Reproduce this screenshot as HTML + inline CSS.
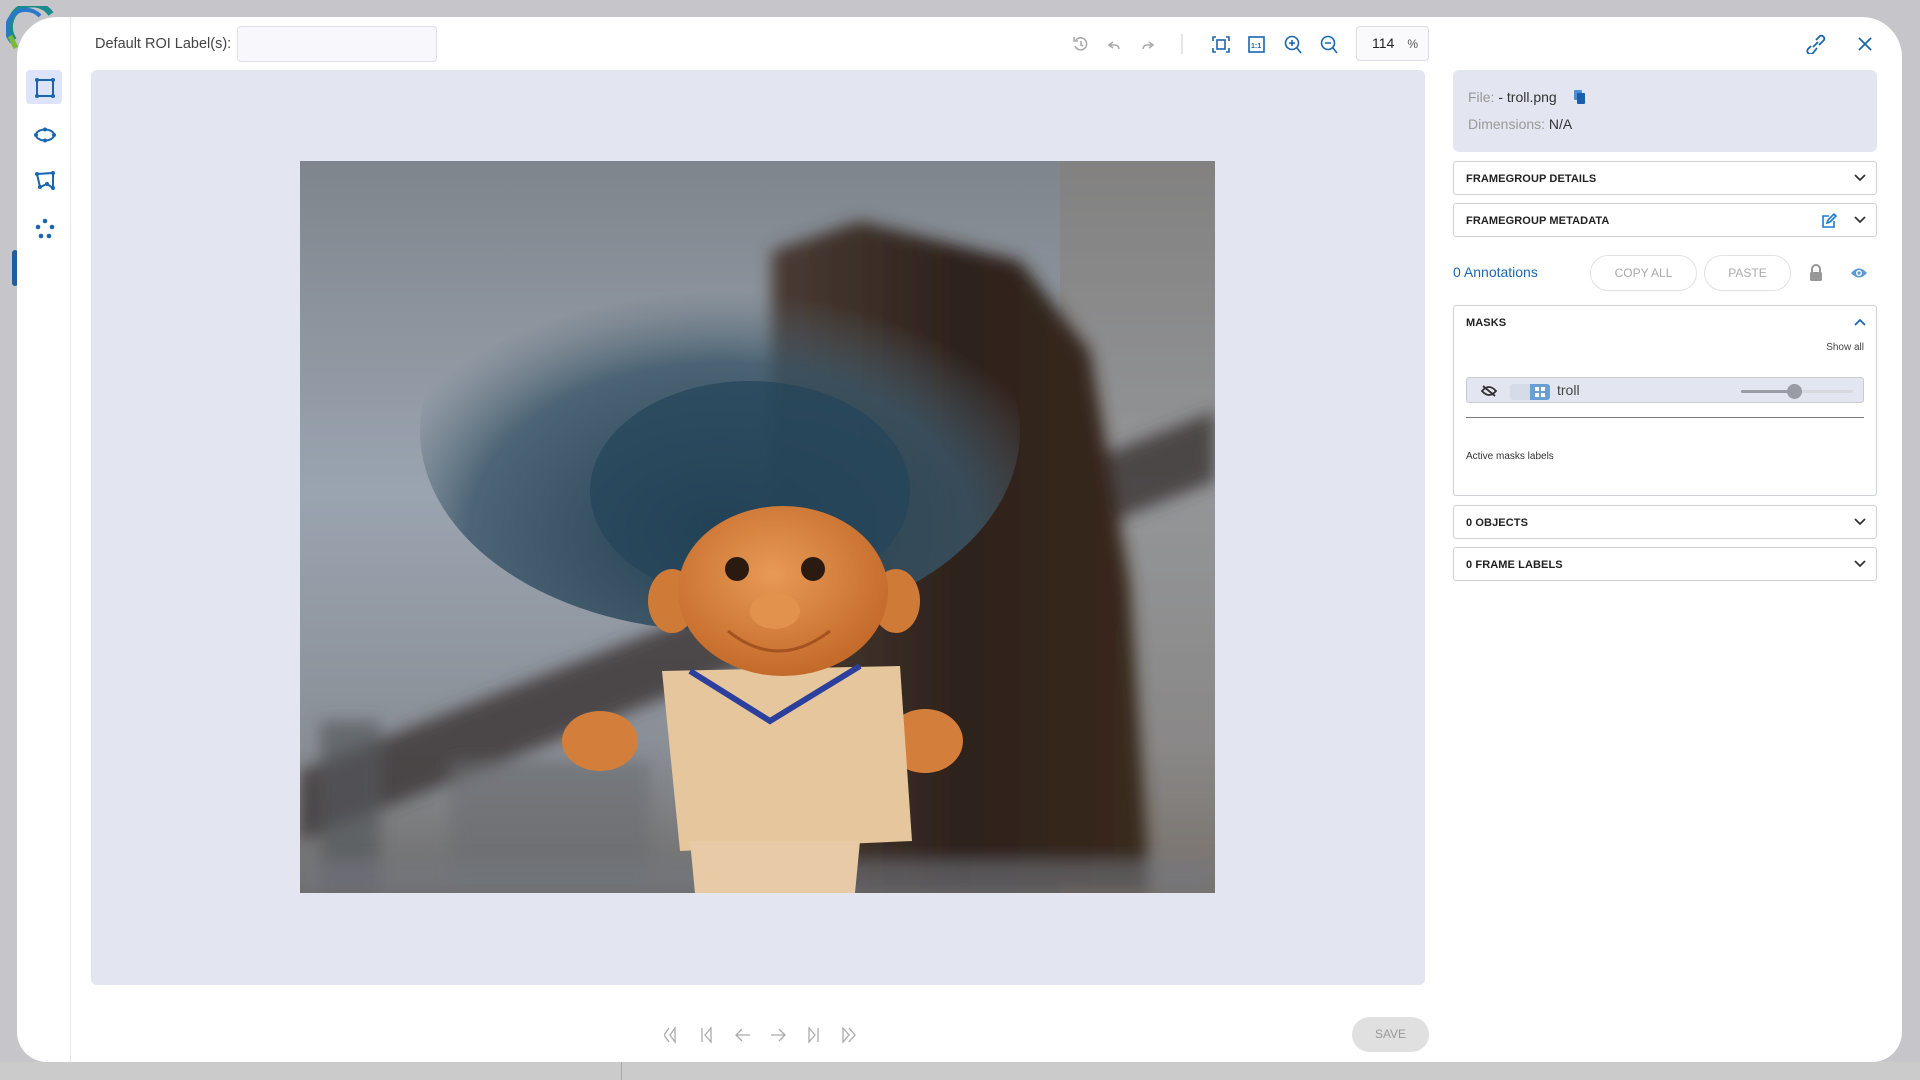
<!DOCTYPE html>
<html><head><meta charset="utf-8"><style>
*{box-sizing:border-box;margin:0;padding:0}
body{width:1920px;height:1080px;overflow:hidden;background:#c6c6ca;font-family:"Liberation Sans",sans-serif;position:relative;color:#333}
.abs{position:absolute}
.modal{left:17px;top:17px;width:1885px;height:1045px;background:#fff;border-radius:40px 40px 30px 30px;overflow:hidden}
.side{left:0;top:0;width:54px;height:100%;border-right:1px solid #e4e6ee}
.ic{stroke:#1a66b0;fill:none;stroke-width:2}
.panel{border:1px solid #cfd2da;border-radius:3px;background:#fff}
.ptitle{font-size:11px;font-weight:bold;color:#222;letter-spacing:.1px}
.btn{border:1px solid #e2e2e2;border-radius:20px;font-size:12px;color:#aaa;text-align:center;line-height:34px}
</style></head><body>
<div class="abs" style="left:0;top:1062px;width:1920px;height:18px;background:#cbcbcb"></div>
<div class="abs" style="left:621px;top:1062px;width:1px;height:18px;background:#aaa"></div>
<svg class="abs" style="left:6px;top:6px" width="50" height="44"><path d="M8 34 A20 20 0 0 1 45 8" stroke="#1b8a8a" stroke-width="6" fill="none"/><path d="M6 36 A18 18 0 0 1 34 10" stroke="#2a78c8" stroke-width="4" fill="none"/><path d="M4 30 L10 42" stroke="#7ab83a" stroke-width="5"/></svg>
<div class="abs" style="left:12px;top:250px;width:6px;height:36px;background:#1b5fa0;border-radius:3px"></div>
<div class="abs modal">
 <div class="abs side" style="width:54px"></div>
 <div class="abs" style="left:9px;top:53px;width:36px;height:34px;background:#dde3fa;border-radius:4px"></div>
 <svg class="abs" style="left:17px;top:60px" width="22" height="22"><rect x="3" y="3" width="16" height="16" class="ic" stroke-width="1.6"/><g fill="#1a66b0"><circle cx="3" cy="3" r="2"/><circle cx="19" cy="3" r="2"/><circle cx="3" cy="19" r="2"/><circle cx="19" cy="19" r="2"/></g></svg>
 <svg class="abs" style="left:16px;top:107px" width="24" height="22"><ellipse cx="12" cy="11" rx="9" ry="5.5" class="ic"/><g fill="#1a66b0"><circle cx="12" cy="5.5" r="2"/><circle cx="12" cy="16.5" r="2"/><circle cx="3" cy="11" r="2"/><circle cx="21" cy="11" r="2"/></g></svg>
 <svg class="abs" style="left:17px;top:153px" width="22" height="22"><path d="M3 4 L19 3 L19 18 L13 14 L6 17 Z" class="ic" stroke-width="1.5"/><g fill="#1a66b0"><circle cx="3" cy="4" r="2"/><circle cx="19" cy="3" r="2"/><circle cx="19" cy="18" r="2"/><circle cx="13" cy="14" r="2"/><circle cx="6" cy="17" r="2"/></g></svg>
 <svg class="abs" style="left:17px;top:200px" width="22" height="22"><g fill="#1a66b0"><circle cx="11" cy="4" r="2.3"/><circle cx="4" cy="10" r="2.3"/><circle cx="18" cy="10" r="2.3"/><circle cx="7" cy="19" r="2.3"/><circle cx="15" cy="19" r="2.3"/></g></svg>

 <div class="abs" style="left:78px;top:19px;font-size:14.5px;color:#444;line-height:16px">Default ROI Label(s):</div>
 <div class="abs" style="left:220px;top:9px;width:200px;height:36px;background:#f8f8fc;border:1px solid #dfe0e6;border-radius:4px"></div>

 <svg class="abs" style="left:1054px;top:17px" width="300" height="20" fill="none" stroke-width="1.6">
  <g stroke="#aaa"><path d="M5 6 A6 6 0 1 1 4 12"/><path d="M3 3 V7 H7"/><path d="M10 7 V11 L12 12"/>
  <path d="M42 8 L38 11 L42 14 M38 11 H44 A4 4 0 0 1 48 15"/>
  <path d="M78 8 L82 11 L78 14 M82 11 H76 A4 4 0 0 0 72 15"/></g>
  <path d="M111 0 V20" stroke="#ccc" stroke-width="1"/>
  <g stroke="#1a66b0" transform="translate(5,0)"><path d="M140 3 H137 V7 M150 3 H153 V7 M140 18 H137 V14 M150 18 H153 V14"/><rect x="141" y="6" width="8" height="9"/>
  <rect x="173" y="3" width="15" height="15"/><text x="175" y="14" font-size="7" fill="#1a66b0" stroke="none" font-family="Liberation Sans" font-weight="bold">1:1</text></g>
  <g stroke="#1a66b0" transform="translate(12,0)">
  <circle cx="209" cy="9" r="6.5"/><path d="M214 14 L218 19 M206 9 H212 M209 6 V12"/>
  <circle cx="245" cy="9" r="6.5"/><path d="M250 14 L254 19 M242 9 H248"/></g>
 </svg>
 <div class="abs" style="left:1339px;top:9px;width:73px;height:35px;border:1px solid #dcdde3;border-radius:4px;background:#fafafd;font-size:14px;line-height:33px;color:#222"><span style="margin-left:15px">114</span><span style="margin-left:13px;font-size:12px;color:#555">%</span></div>
 <svg class="abs" style="left:1788px;top:17px" width="90" height="20" fill="none" stroke="#1a66b0" stroke-width="1.8"><path d="M6 12 L3 15 A3 3 0 0 0 8 19 L12 14 M11 6 L15 2 A3 3 0 0 1 19 6 L14 11 M8 13 L13 8"/><path d="M54 4 L66 16 M66 4 L54 16"/></svg>

 <div class="abs" style="left:74px;top:53px;width:1334px;height:915px;background:#e3e6f0;border-radius:6px"></div>
 <svg class="abs" style="left:283px;top:144px" width="915" height="732" viewBox="0 0 915 732">
  <defs>
   <linearGradient id="bg" x1="0" y1="0" x2="0" y2="1"><stop offset="0" stop-color="#7f858c"/><stop offset=".45" stop-color="#9aa4b0"/><stop offset=".8" stop-color="#8a8f96"/><stop offset="1" stop-color="#6e6c6a"/></linearGradient>
   <linearGradient id="tw" x1="0" y1="0" x2="1" y2="0"><stop offset="0" stop-color="#4a3c34"/><stop offset=".5" stop-color="#2e221c"/><stop offset="1" stop-color="#3a2a1e"/></linearGradient>
   <radialGradient id="hd" cx=".45" cy=".4" r=".6"><stop offset="0" stop-color="#e89a55"/><stop offset="1" stop-color="#c46a2a"/></radialGradient>
   <radialGradient id="hr" cx=".5" cy=".75" r=".6"><stop offset="0" stop-color="#1f3c4e"/><stop offset=".7" stop-color="#3a5668" stop-opacity=".8"/><stop offset="1" stop-color="#5a6c78" stop-opacity="0"/></radialGradient>
   <filter id="bl"><feGaussianBlur stdDeviation="8"/></filter>
  </defs>
  <rect width="915" height="732" fill="url(#bg)"/>
  <rect x="760" y="0" width="155" height="732" fill="#8a7a6c" opacity=".35"/>
  <g filter="url(#bl)">
  <path d="M0 640 L0 610 L915 250 L915 320 L0 680 Z" fill="#3e3a38" opacity=".85"/>
  <rect x="20" y="560" width="60" height="172" fill="#55585c" opacity=".7"/>
  <rect x="150" y="600" width="200" height="132" fill="#6a6c70" opacity=".6"/>
  <path d="M472 90 L560 60 L720 100 L790 190 L830 420 L850 732 L490 732 L470 420 Z" fill="url(#tw)"/>
  <rect x="0" y="700" width="915" height="32" fill="#747880" opacity=".6"/>
  </g>
  <ellipse cx="420" cy="270" rx="300" ry="200" fill="url(#hr)"/>
  <ellipse cx="450" cy="330" rx="160" ry="110" fill="#24445a" opacity=".7"/>
  <ellipse cx="300" cy="580" rx="38" ry="30" fill="#d47e3c"/>
  <ellipse cx="625" cy="580" rx="38" ry="32" fill="#d47e3c"/>
  <path d="M362 510 L600 505 L612 680 L380 690 Z" fill="#e6c69c"/>
  <path d="M390 680 L560 680 L555 732 L395 732 Z" fill="#e8cba6"/>
  <path d="M390 510 L470 560 L560 505" stroke="#2c3f9c" stroke-width="6" fill="none"/>
  <ellipse cx="372" cy="440" rx="24" ry="32" fill="#d07a38"/>
  <ellipse cx="596" cy="440" rx="24" ry="32" fill="#d07a38"/>
  <ellipse cx="483" cy="430" rx="105" ry="85" fill="url(#hd)"/>
  <circle cx="437" cy="408" r="12" fill="#2a1a10"/><circle cx="513" cy="408" r="12" fill="#2a1a10"/>
  <ellipse cx="475" cy="450" rx="25" ry="18" fill="#e3924e"/>
  <path d="M428 470 Q478 510 530 470" stroke="#a45220" stroke-width="3" fill="none"/>
 </svg>

 <div class="abs" style="left:1436px;top:53px;width:424px;height:82px;background:#e3e6f0;border-radius:6px;font-size:14px;color:#999">
  <div class="abs" style="left:15px;top:19px">File: <span style="color:#333">- troll.png</span></div>
  <svg class="abs" style="left:120px;top:19px" width="14" height="16"><rect x="1" y="1" width="8" height="10" rx="1" fill="#4d8ed0"/><rect x="4" y="4" width="8" height="11" rx="1" fill="#1a5fae"/></svg>
  <div class="abs" style="left:15px;top:46px">Dimensions: <span style="color:#333">N/A</span></div>
 </div>
 <svg width="0" height="0" style="position:absolute"><defs><path id="chev" d="M1 1 L6 6 L11 1" fill="none" stroke="#333" stroke-width="1.8"/></defs></svg>
 <div class="abs panel" style="left:1436px;top:144px;width:424px;height:34px"><div class="abs ptitle" style="left:12px;top:11px">FRAMEGROUP DETAILS</div><svg class="abs" style="left:400px;top:12px" width="12" height="8"><use href="#chev"/></svg></div>
 <div class="abs panel" style="left:1436px;top:186px;width:424px;height:34px"><div class="abs ptitle" style="left:12px;top:11px">FRAMEGROUP METADATA</div>
  <svg class="abs" style="left:367px;top:9px" width="16" height="16" fill="none" stroke="#1a7ad0" stroke-width="1.6"><path d="M8 3 H2 V14 H13 V8"/><path d="M6 10 L7 7 L13 1 L15 3 L9 9 Z"/></svg>
  <svg class="abs" style="left:400px;top:12px" width="12" height="8"><use href="#chev"/></svg></div>
 <div class="abs" style="left:1436px;top:247px;font-size:14px;color:#1a66b0">0 Annotations</div>
 <div class="abs btn" style="left:1573px;top:238px;width:107px;height:36px">COPY ALL</div>
 <div class="abs btn" style="left:1687px;top:238px;width:87px;height:36px">PASTE</div>
 <svg class="abs" style="left:1791px;top:247px" width="16" height="18"><path d="M4 8 V5 A4 4 0 0 1 12 5 V8" fill="none" stroke="#999" stroke-width="2"/><rect x="2" y="8" width="12" height="9" rx="1.5" fill="#999"/></svg>
 <svg class="abs" style="left:1833px;top:250px" width="18" height="12"><path d="M1 6 Q9 -3 17 6 Q9 15 1 6Z" fill="#5a9ad4"/><circle cx="9" cy="6" r="3" fill="#fff"/><circle cx="9" cy="6" r="1.6" fill="#5a9ad4"/></svg>
 <div class="abs panel" style="left:1436px;top:288px;width:424px;height:191px">
  <div class="abs ptitle" style="left:12px;top:11px">MASKS</div>
  <svg class="abs" style="left:400px;top:12px" width="12" height="8"><path d="M1 7 L6 2 L11 7" fill="none" stroke="#1a66b0" stroke-width="1.8"/></svg>
  <div class="abs" style="right:12px;top:36px;font-size:10px;color:#444">Show all</div>
  <div class="abs" style="left:12px;top:71px;width:398px;height:26px;background:#e3e6f0;border:1px solid #c8cad4;border-radius:3px">
   <svg class="abs" style="left:14px;top:7px" width="16" height="12"><path d="M1 6 Q8 -2 15 6 Q8 14 1 6Z" fill="none" stroke="#333" stroke-width="1.8"/><path d="M2 1 L14 11" stroke="#333" stroke-width="1.8"/></svg>
   <div class="abs" style="left:43px;top:6px;width:20px;height:16px;background:#d4dce8;border-radius:3px 0 0 3px"></div>
   <div class="abs" style="left:63px;top:6px;width:20px;height:16px;background:#6a9fd0;border-radius:0 3px 3px 0"></div>
   <svg class="abs" style="left:67px;top:8px" width="12" height="12" fill="#fff"><rect x="1" y="1" width="4" height="4"/><rect x="7" y="1" width="4" height="4"/><rect x="1" y="7" width="4" height="4"/><rect x="7" y="7" width="4" height="4"/></svg>
   <div class="abs" style="left:90px;top:4px;font-size:14px;color:#444">troll</div>
   <div class="abs" style="left:274px;top:12px;width:112px;height:3px;background:#d6d8de;border-radius:2px"></div>
   <div class="abs" style="left:274px;top:12px;width:54px;height:3px;background:#999ca4;border-radius:2px"></div>
   <div class="abs" style="left:320px;top:6px;width:15px;height:15px;background:#999ca4;border-radius:50%"></div>
  </div>
  <div class="abs" style="left:12px;top:111px;width:398px;height:1px;background:#777"></div>
  <div class="abs" style="left:12px;top:145px;font-size:10px;color:#333">Active masks labels</div>
 </div>
 <div class="abs panel" style="left:1436px;top:488px;width:424px;height:34px"><div class="abs ptitle" style="left:12px;top:11px">0 OBJECTS</div><svg class="abs" style="left:400px;top:12px" width="12" height="8"><use href="#chev"/></svg></div>
 <div class="abs panel" style="left:1436px;top:530px;width:424px;height:34px"><div class="abs ptitle" style="left:12px;top:11px">0 FRAME LABELS</div><svg class="abs" style="left:400px;top:12px" width="12" height="8"><use href="#chev"/></svg></div>

 <svg class="abs" style="left:647px;top:1009px" width="200" height="18" fill="none" stroke="#aaa" stroke-width="1.3">
  <path d="M5 2 L0 9 L5 16 M11 2 L6 9 L11 16 Z"/>
  <path d="M38 2 V16 M47 2 L41 9 L47 16 Z"/>
  <path d="M86 9 H72 M78 3 L72 9 L78 15"/>
  <path d="M107 9 H121 M115 3 L121 9 L115 15"/>
  <path d="M145 2 L151 9 L145 16 Z M154 2 V16"/>
  <path d="M179 2 L185 9 L179 16 Z M185 2 L191 9 L185 16"/>
 </svg>
 <div class="abs" style="left:1335px;top:1000px;width:77px;height:35px;background:#e0e0e0;border-radius:18px;font-size:12px;color:#999;text-align:center;line-height:35px">SAVE</div>
</div>
</body></html>
